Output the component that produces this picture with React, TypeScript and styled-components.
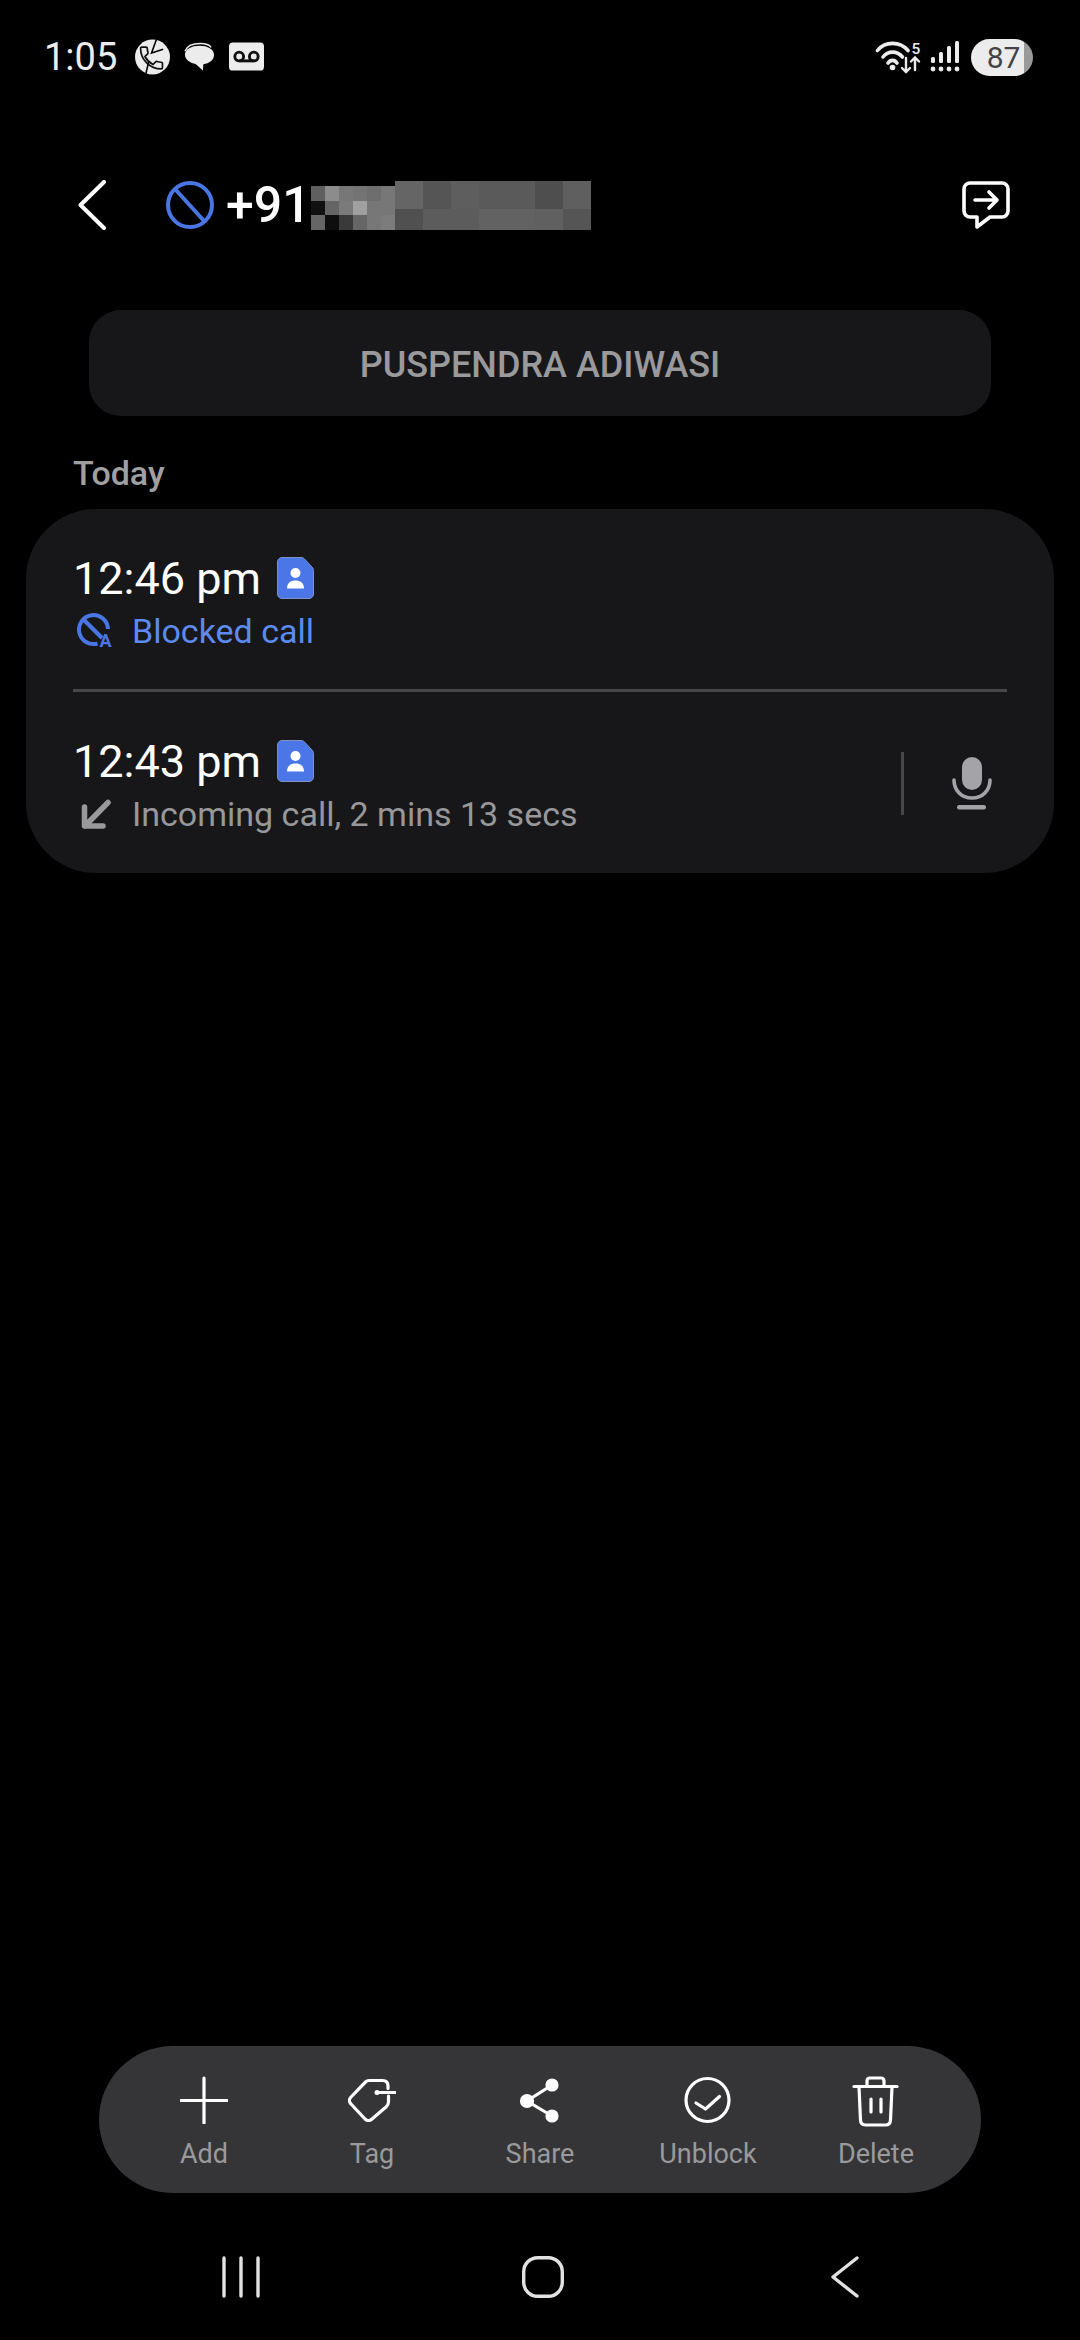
import React from 'react';
import styled, { createGlobalStyle } from 'styled-components';

const GlobalStyle = createGlobalStyle`
  html, body {
    margin: 0;
    padding: 0;
    background: #000;
    font-family: Roboto, "Liberation Sans", sans-serif;
  }
  * { box-sizing: border-box; }
`;

const SMALL_PIXELS = [
  ['#5f5f5f', '#8c8c8c', '#777777', '#747474', '#6e6e6e', '#777777'],
  ['#111111', '#656565', '#7a7a7a', '#a0a0a0', '#777777', '#777777'],
  ['#666666', '#0e0e0e', '#3a3a3a', '#666666', '#777777', '#7c7c7c'],
];

const BIG_PIXELS = [
  ['#656565', '#555555', '#5e5e5e', '#5a5a5a', '#5a5a5a', '#4e4e4e', '#5f5f5f'],
  ['#505050', '#5c5c5c', '#5c5c5c', '#626262', '#626262', '#606060', '#555555'],
];

const Censored = () => (
  <PixelBlock width="280" height="49" viewBox="0 0 280 49" shapeRendering="crispEdges">
    {SMALL_PIXELS.map((row, r) =>
      row.map((color, c) => (
        <rect key={`s${r}${c}`} x={c * 14} y={5 + r * 14.6} width="14.2" height="14.8" fill={color} />
      ))
    )}
    {BIG_PIXELS.map((row, r) =>
      row.map((color, c) => (
        <rect key={`b${r}${c}`} x={84 + c * 28} y={r * 28} width="28.2" height={r === 0 ? 28 : 21} fill={color} />
      ))
    )}
  </PixelBlock>
);

const CallStatusIcon = () => (
  <svg width="35" height="36" viewBox="0 0 36 36">
    <circle cx="18" cy="18" r="18" fill="#ececec" />
    <g transform="translate(2 4) scale(1.25)">
      <path d="M6.620 10.790c1.440 2.830 3.760 5.140 6.590 6.590l2.200-2.200c.270-.270.670-.360 1.020-.240 1.120.370 2.330.570 3.570.570.550 0 1 .450 1 1V20c0 .550-.450 1-1 1-9.390 0-17-7.610-17-17 0-.550.450-1 1-1h3.500c.550 0 1 .450 1 1 0 1.250.200 2.450.570 3.570.110.350.030.740-.250 1.020l-2.200 2.200z" fill="#ececec" stroke="#111" strokeWidth="1.400" />
    </g>
    <path d="M22 0l-5 14 12-4M14 23l-3 13" fill="none" stroke="#000" strokeWidth="1.600" />
  </svg>
);

const MessageStatusIcon = () => (
  <svg width="31" height="30" viewBox="0 0 32 30">
    <path d="M1 9C3 3 9 1 17 1c5 0 9 1 11 4" fill="none" stroke="#ececec" strokeWidth="1.500" />
    <path d="M16 3.500c8.500 0 15 3.500 15 9.500 0 5-5 9-11 9.500l-.500 6.500-7.500-6.800C7 21.500 1 18 1 13c0-6 6.500-9.500 15-9.500z" fill="#ececec" />
  </svg>
);

const VoicemailStatusIcon = () => (
  <svg width="35" height="30" viewBox="0 0 36 30">
    <rect width="36" height="29" rx="4" fill="#ececec" />
    <circle cx="10.500" cy="14.500" r="4.500" fill="none" stroke="#111" strokeWidth="3" />
    <circle cx="25.500" cy="14.500" r="4.500" fill="none" stroke="#111" strokeWidth="3" />
    <path d="M10.500 19h15" stroke="#111" strokeWidth="3" />
  </svg>
);

const WifiIcon = () => (
  <svg width="48" height="36" viewBox="0 0 48 36" fill="none" stroke="#ececec" strokeLinecap="round">
    <path d="M2.500 11.500C10 2 25 2 33 11.500" strokeWidth="3.600" />
    <path d="M8 18C13 11.500 22 11.500 27.500 18" strokeWidth="3.600" />
    <path d="M13 24C15.500 20.500 19.500 20.500 22 24" strokeWidth="3.600" />
    <circle cx="17.500" cy="28.500" r="2.800" fill="#ececec" stroke="none" />
    <path d="M31 19v14M27 29l4 4 4-4" strokeWidth="2.400" />
    <path d="M40 31V19M36 22.500l4-4 4 4" strokeWidth="2.400" />
    <text x="36.500" y="15" fontFamily="Roboto" fontSize="15.500" fontWeight="500" fill="#ececec" stroke="none">5</text>
  </svg>
);

const SignalIcon = () => (
  <svg width="30" height="32" viewBox="0 0 30 32" fill="#ececec">
    <rect x="1" y="16" width="4" height="6" rx="1.500" />
    <rect x="9" y="11" width="4" height="11" rx="1.500" />
    <rect x="17" y="5" width="4" height="17" rx="1.500" />
    <rect x="25" y="0" width="4" height="22" rx="1.500" />
    <circle cx="3" cy="28" r="2.400" />
    <circle cx="11" cy="28" r="2.400" />
    <circle cx="19" cy="28" r="2.400" />
    <circle cx="27" cy="28" r="2.400" />
  </svg>
);

const BackChevron = () => (
  <svg width="28" height="50" viewBox="0 0 28 50" fill="none" stroke="#fff" strokeWidth="4" strokeLinecap="round" strokeLinejoin="round">
    <path d="M26 2L2.500 25 26 48" />
  </svg>
);

const BlockedIcon = () => (
  <svg width="50" height="50" viewBox="0 0 50 50" fill="none" stroke="#4a76e4" strokeWidth="4">
    <circle cx="25" cy="25" r="22" />
    <path d="M10 9l30 33" />
  </svg>
);

const MessageForwardIcon = () => (
  <svg width="48" height="48" viewBox="0 0 48 48" fill="none" stroke="#fff" strokeWidth="3.600" strokeLinecap="round" strokeLinejoin="round">
    <path d="M8 2h32a6 6 0 0 1 6 6v22a6 6 0 0 1-6 6H28L15 46V36H8a6 6 0 0 1-6-6V8a6 6 0 0 1 6-6z" />
    <path d="M13 19h22M27 11l8 8-8 8" />
  </svg>
);

const ContactBadge = () => (
  <svg width="37" height="42" viewBox="0 0 37 42">
    <path d="M5 .500h19c1.500 0 2.500.500 3.500 1.500l7.500 8c1 1 1.500 2 1.500 3.500V37a4.500 4.500 0 0 1-4.500 4.500H5A4.500 4.500 0 0 1 .500 37V5A4.500 4.500 0 0 1 5 .500z" fill="#4a76e8" stroke="#7f93c8" />
    <circle cx="18.500" cy="16" r="5" fill="#fff" />
    <path d="M10 31.500c0-5.500 3.500-8 8.500-8s8.500 2.500 8.500 8z" fill="#fff" />
  </svg>
);

const BlockedCallIcon = () => (
  <svg width="38" height="44" viewBox="0 -4 38 44" fill="none" stroke="#4a76e4" strokeWidth="4">
    <path d="M20.500 30.500A14.500 14.500 0 1 1 31 16" />
    <path d="M7 7l18 18" />
    <text x="22.500" y="33.500" fontFamily="Roboto" fontSize="18" fontWeight="700" fill="#4a76e4" stroke="none">A</text>
  </svg>
);

const IncomingArrow = () => (
  <svg width="36" height="36" viewBox="0 0 36 36" fill="none" stroke="#99999c" strokeWidth="5.500" strokeLinecap="round" strokeLinejoin="round">
    <path d="M31 6.500L8 30M7.500 11v19h18.500" />
  </svg>
);

const MicIcon = () => (
  <svg width="40" height="53" viewBox="0 0 40 53">
    <rect x="10" y="0" width="20" height="33" rx="10" fill="#a3a3a8" />
    <path d="M2 23c0 10 7 18 18 18s18-8 18-18" fill="none" stroke="#a3a3a8" strokeWidth="3.600" strokeLinecap="round" />
    <rect x="5" y="48" width="29" height="4.500" rx="2.200" fill="#a3a3a8" />
  </svg>
);

const PlusIcon = () => (
  <svg width="48" height="48" viewBox="0 0 48 48" fill="none" stroke="#fff" strokeWidth="3.200" strokeLinecap="round">
    <path d="M24 2v45M1 24.500h46" />
  </svg>
);

const TagIcon = () => (
  <svg width="48" height="48" viewBox="0 0 48 48" fill="none" stroke="#fff" strokeWidth="3.200" strokeLinecap="round" strokeLinejoin="round">
    <path d="M40 12.500V10c0-3.500-2-5.500-5.500-5.500H21c-1.500 0-2.500.500-3.500 1.500L3 21c-2 2-2 5 0 7l14 15c2 2 5 2 7 0l14-12c1.500-1.500 2.500-3 2.500-5v-6" />
    <path d="M29 16.500h18" />
    <circle cx="29" cy="16.500" r="2.500" fill="#fff" stroke="none" />
  </svg>
);

const ShareIcon = () => (
  <svg width="48" height="48" viewBox="0 0 48 48" fill="#fff" stroke="#fff" strokeWidth="3.200">
    <path d="M36 9L11 25l25 15" fill="none" />
    <circle cx="36" cy="9" r="5" />
    <circle cx="11" cy="25" r="5.500" />
    <circle cx="36" cy="40" r="5" />
  </svg>
);

const CheckCircleIcon = () => (
  <svg width="48" height="48" viewBox="0 0 48 48" fill="none" stroke="#fff" strokeWidth="3.200" strokeLinecap="round" strokeLinejoin="round">
    <circle cx="23.500" cy="24" r="21.500" />
    <path d="M12 27l9.500 6 14-12.500" />
  </svg>
);

const TrashIcon = () => (
  <TallIcon width="48" height="52" viewBox="0 0 48 52" fill="none" stroke="#fff" strokeWidth="3.200" strokeLinecap="round" strokeLinejoin="round">
    <path d="M2 10.500h43" />
    <path d="M15 10V5c0-2 1-3 3-3h11c2 0 3 1 3 3v5" />
    <path d="M7 11l1.500 33c.1 3 2 5 5 5h20c3 0 4.900-2 5-5L40 11" />
    <path d="M19 23v13M29 23v13" />
  </TallIcon>
);

const ACTIONS = [
  { label: 'Add', icon: <PlusIcon /> },
  { label: 'Tag', icon: <TagIcon /> },
  { label: 'Share', icon: <ShareIcon /> },
  { label: 'Unblock', icon: <CheckCircleIcon /> },
  { label: 'Delete', icon: <TrashIcon /> },
];

export default function App() {
  return (
    <>
      <GlobalStyle />
      <Page>
        <StatusBar>
          <StatusLeft>
            <Clock>1:05</Clock>
            <CallStatusIcon />
            <MessageStatusIcon />
            <VoicemailStatusIcon />
          </StatusLeft>
          <StatusRight>
            <WifiIcon />
            <SignalIcon />
            <Battery>87</Battery>
          </StatusRight>
        </StatusBar>

        <Header>
          <HeaderLeft>
            <BackChevron />
            <NumberGroup>
              <BlockedIcon />
              <PhoneNumber>+91</PhoneNumber>
              <Censored />
            </NumberGroup>
          </HeaderLeft>
          <MessageForwardIcon />
        </Header>

        <NamePill>PUSPENDRA ADIWASI</NamePill>
        <DateLabel>Today</DateLabel>

        <CallCard>
          <CallRow>
            <CallInfo>
              <TimeLine>
                <CallTime>12:46 pm</CallTime>
                <ContactBadge />
              </TimeLine>
              <DetailLine>
                <DetailIcon><BlockedCallIcon /></DetailIcon>
                <DetailText $blocked>Blocked call</DetailText>
              </DetailLine>
            </CallInfo>
          </CallRow>
          <RowDivider />
          <CallRow>
            <CallInfo>
              <TimeLine>
                <CallTime>12:43 pm</CallTime>
                <ContactBadge />
              </TimeLine>
              <DetailLine>
                <DetailIcon><IncomingArrow /></DetailIcon>
                <DetailText>Incoming call, 2 mins 13 secs</DetailText>
              </DetailLine>
            </CallInfo>
            <RecordingAction>
              <VerticalRule />
              <MicIcon />
            </RecordingAction>
          </CallRow>
        </CallCard>

        <Spacer />

        <ActionBar>
          {ACTIONS.map(action => (
            <ActionItem key={action.label}>
              <ActionIconSlot>{action.icon}</ActionIconSlot>
              <ActionLabel>{action.label}</ActionLabel>
            </ActionItem>
          ))}
        </ActionBar>

        <NavBar>
          <NavSlot>
            <svg width="40" height="42" viewBox="0 0 40 42" stroke="#e2e2e2" strokeWidth="3.400" strokeLinecap="round">
              <path d="M3 2v38M20 2v38M37 2v38" />
            </svg>
          </NavSlot>
          <NavSlot>
            <svg width="42" height="42" viewBox="0 0 42 42" fill="none" stroke="#e2e2e2" strokeWidth="3.400">
              <rect x="1.700" y="1.700" width="38.600" height="38.600" rx="14" />
            </svg>
          </NavSlot>
          <NavSlot>
            <svg width="28" height="42" viewBox="0 0 28 42" fill="none" stroke="#e2e2e2" strokeWidth="3.400" strokeLinecap="round" strokeLinejoin="round">
              <path d="M26 2L2 21l24 19" />
            </svg>
          </NavSlot>
        </NavBar>
      </Page>
    </>
  );
}

const Page = styled.div`
  width: 1080px;
  height: 2340px;
  background: #000;
  display: flex;
  flex-direction: column;
  overflow: hidden;
`;

const StatusBar = styled.div`
  height: 114px;
  padding: 0 47px 0 44px;
  display: flex;
  align-items: center;
  justify-content: space-between;
`;

const StatusLeft = styled.div`
  display: flex;
  align-items: center;
  gap: 14px;
`;

const Clock = styled.span`
  font-size: 38px;
  color: #ececec;
  margin-right: 4px;
`;

const StatusRight = styled.div`
  display: flex;
  align-items: center;
  gap: 7px;
`;

const Battery = styled.div`
  width: 62px;
  height: 37px;
  margin-left: 4px;
  border-radius: 19px;
  padding-left: 3px;
  display: flex;
  align-items: center;
  justify-content: center;
  font-size: 30px;
  color: #444;
  background: linear-gradient(to right, #ececec 53px, #9a9a9a 53px);
`;

const Header = styled.div`
  height: 182px;
  padding: 0 70px 0 78px;
  display: flex;
  align-items: center;
  justify-content: space-between;
`;

const HeaderLeft = styled.div`
  display: flex;
  align-items: center;
  gap: 59px;
`;

const NumberGroup = styled.div`
  display: flex;
  align-items: center;
`;

const PhoneNumber = styled.span`
  margin-left: 11px;
  width: 85px;
  font-size: 50px;
  font-weight: 500;
  color: #fff;
  white-space: nowrap;
`;

const PixelBlock = styled.svg`
  display: block;
`;

const NamePill = styled.div`
  height: 106px;
  margin: 14px 89px 0;
  padding-top: 3px;
  border-radius: 32px;
  background: #17171a;
  display: flex;
  align-items: center;
  justify-content: center;
  font-size: 36px;
  font-weight: 500;
  color: #9a9a9c;
`;

const DateLabel = styled.div`
  margin: 37px 0 0 73px;
  font-size: 34px;
  line-height: 40px;
  font-weight: 500;
  color: #a0a0a2;
`;

const CallCard = styled.div`
  margin: 16px 26px 0;
  height: 364px;
  border-radius: 70px;
  background: #17171a;
  display: flex;
  flex-direction: column;
`;

const CallRow = styled.div`
  height: 180px;
  padding: 43px 62px 0 47px;
  display: flex;
  justify-content: space-between;
`;

const CallInfo = styled.div`
  display: flex;
  flex-direction: column;
  gap: 5px;
`;

const TimeLine = styled.div`
  height: 52px;
  display: flex;
  align-items: center;
  gap: 16px;
`;

const CallTime = styled.span`
  font-size: 45px;
  color: #fff;
`;

const DetailLine = styled.div`
  height: 44px;
  display: flex;
  align-items: center;
`;

const DetailIcon = styled.span`
  width: 59px;
  padding-left: 4px;
  display: flex;
`;

const DetailText = styled.span<{ $blocked?: boolean }>`
  font-size: 34px;
  color: ${p => (p.$blocked ? '#5d8aee' : '#98989b')};
`;

const RowDivider = styled.div`
  height: 3px;
  margin: 0 47px;
  background: #47474a;
`;

const RecordingAction = styled.div`
  height: 63px;
  margin-top: 17px;
  display: flex;
  align-items: center;
  gap: 48px;
`;

const VerticalRule = styled.div`
  width: 3px;
  height: 63px;
  background: #47474a;
`;

const Spacer = styled.div`
  flex: 1;
`;

const ActionBar = styled.div`
  height: 147px;
  margin: 0 99px;
  padding: 30px 21px 0;
  border-radius: 74px;
  background: #353537;
  display: grid;
  grid-template-columns: repeat(5, 1fr);
`;

const ActionItem = styled.div`
  display: flex;
  flex-direction: column;
  align-items: center;
`;

const ActionIconSlot = styled.div`
  height: 48px;
`;

const TallIcon = styled.svg`
  display: block;
  overflow: visible;
`;

const ActionLabel = styled.span`
  margin-top: 13px;
  font-size: 27px;
  line-height: 34px;
  color: #9a9a9c;
`;

const NavBar = styled.div`
  height: 147px;
  padding: 63px 0 0 90px;
  display: flex;
  align-items: flex-start;
`;

const NavSlot = styled.div`
  width: 302px;
  display: flex;
  justify-content: center;
`;
